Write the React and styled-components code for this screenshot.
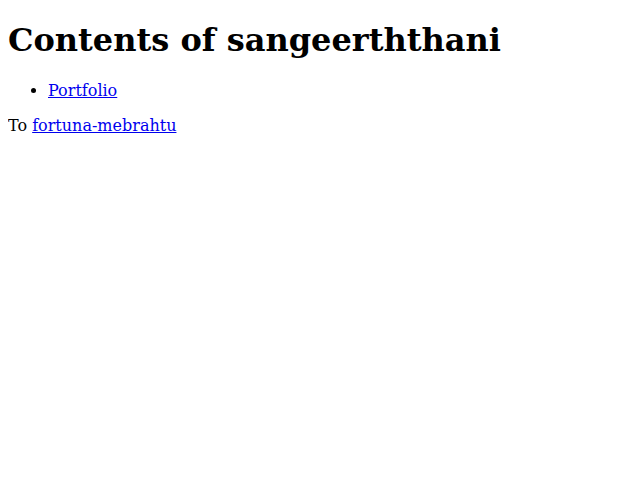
import React from "react"
import styled, { createGlobalStyle } from "styled-components"

const GlobalStyle = createGlobalStyle`
  body {
    margin: 0 8px 8px;
    font-family: "DejaVu Serif", serif;
    font-size: 16px;
    color: #000;
    background: #fff;
  }
`

const Page = styled.div`
  display: flow-root;
`

const Title = styled.h1`
  font-size: 32px;
  font-weight: bold;
  margin: 21.44px 0;
`

const LinkList = styled.ul`
  margin: 16px 0;
  padding-left: 40px;
`

const LinkItem = styled.li`
  list-style: disc;
`

const Link = styled.a`
  color: #0000ee;
  text-decoration: underline;
`

const Paragraph = styled.p`
  margin: 16px 0;
`

const App = () => {
  const links = ["Portfolio"]

  return (
    <Page>
      <GlobalStyle />
      <Title>Contents of sangeerththani</Title>
      <LinkList>
        {links.map((name) => (
          <LinkItem key={name}>
            <Link href="#">{name}</Link>
          </LinkItem>
        ))}
      </LinkList>
      <Paragraph>
        To <Link href="#">fortuna-mebrahtu</Link>
      </Paragraph>
    </Page>
  )
}

export default App
